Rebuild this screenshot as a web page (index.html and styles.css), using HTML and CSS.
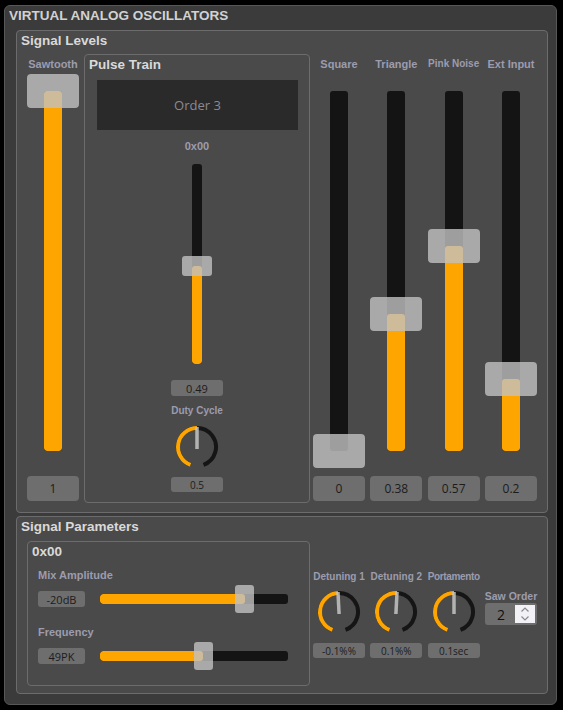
FILE: index.html
```html
<!DOCTYPE html>
<html>
<head>
<meta charset="utf-8">
<link rel="stylesheet" href="styles.css">
</head>
<body>
<div class="app">
  <div class="app-title">VIRTUAL ANALOG OSCILLATORS</div>

  <section class="panel levels">
    <div class="panel-title">Signal Levels</div>
    <div class="levels-body">
      <div class="vcol">
        <div class="vlabel">Sawtooth</div>
        <div class="vslider">
          <div class="vtrack"><div class="vfill" style="height:100%"></div></div>
          <div class="vhandle" style="top:0px"></div>
        </div>
        <div class="vvalue">1</div>
      </div>

      <div class="panel pulse">
        <div class="panel-title pulse-title">Pulse Train</div>
        <div class="display">Order 3</div>
        <div class="sublabel hex">0x00</div>
        <div class="pslider">
          <div class="ptrack"><div class="vfill" style="height:49%"></div></div>
          <div class="phandle" style="top:102px"></div>
        </div>
        <div class="small-value pval">0.49</div>
        <div class="sublabel duty">Duty Cycle</div>
        <svg class="knob duty-knob" width="44" height="44" viewBox="0 0 44 44">
          <path class="k-bg" d="M15.5 39.85 A19 19 0 1 1 28.5 39.85"/>
          <path class="k-fg" d="M15.5 39.85 A19 19 0 0 1 22 3"/>
          <line class="k-ptr" x1="22" y1="24" x2="22" y2="2"/>
        </svg>
        <div class="small-value kval">0.5</div>
      </div>

      <div class="vgroup">
        <div class="vcol">
          <div class="vlabel">Square</div>
          <div class="vslider">
            <div class="vtrack"><div class="vfill" style="height:0%"></div></div>
            <div class="vhandle" style="top:360px"></div>
          </div>
          <div class="vvalue">0</div>
        </div>
        <div class="vcol">
          <div class="vlabel">Triangle</div>
          <div class="vslider">
            <div class="vtrack"><div class="vfill" style="height:38%"></div></div>
            <div class="vhandle" style="top:223px"></div>
          </div>
          <div class="vvalue">0.38</div>
        </div>
        <div class="vcol">
          <div class="vlabel small">Pink Noise</div>
          <div class="vslider">
            <div class="vtrack"><div class="vfill" style="height:57%"></div></div>
            <div class="vhandle" style="top:155px"></div>
          </div>
          <div class="vvalue">0.57</div>
        </div>
        <div class="vcol">
          <div class="vlabel">Ext Input</div>
          <div class="vslider">
            <div class="vtrack"><div class="vfill" style="height:20%"></div></div>
            <div class="vhandle" style="top:288px"></div>
          </div>
          <div class="vvalue">0.2</div>
        </div>
      </div>
    </div>
  </section>

  <section class="panel params">
    <div class="panel-title">Signal Parameters</div>
    <div class="params-body">
      <div class="panel osc">
        <div class="panel-title">0x00</div>
        <div class="hlabel first">Mix Amplitude</div>
        <div class="hrow">
          <div class="hvalue">-20dB</div>
          <div class="hslider">
            <div class="htrack"><div class="hfill" style="width:77%"></div></div>
            <div class="hhandle" style="left:135px"></div>
          </div>
        </div>
        <div class="hlabel second">Frequency</div>
        <div class="hrow">
          <div class="hvalue">49PK</div>
          <div class="hslider">
            <div class="htrack"><div class="hfill" style="width:55%"></div></div>
            <div class="hhandle" style="left:94px"></div>
          </div>
        </div>
      </div>

      <div class="kgroup">
        <div class="kcol">
          <div class="klabel">Detuning 1</div>
          <svg class="knob" width="44" height="44" viewBox="0 0 44 44">
            <path class="k-bg" d="M15.5 39.85 A19 19 0 1 1 28.5 39.85"/>
            <path class="k-fg" d="M15.5 39.85 A19 19 0 0 1 20.94 3.03"/>
            <line class="k-ptr" x1="22" y1="24" x2="22" y2="2" transform="rotate(-3 22 22)"/>
          </svg>
          <div class="small-value">-0.1%%</div>
        </div>
        <div class="kcol">
          <div class="klabel">Detuning 2</div>
          <svg class="knob" width="44" height="44" viewBox="0 0 44 44">
            <path class="k-bg" d="M15.5 39.85 A19 19 0 1 1 28.5 39.85"/>
            <path class="k-fg" d="M15.5 39.85 A19 19 0 0 1 23.06 3.03"/>
            <line class="k-ptr" x1="22" y1="24" x2="22" y2="2" transform="rotate(3 22 22)"/>
          </svg>
          <div class="small-value">0.1%%</div>
        </div>
        <div class="kcol">
          <div class="klabel port">Portamento</div>
          <svg class="knob" width="44" height="44" viewBox="0 0 44 44">
            <path class="k-bg" d="M15.5 39.85 A19 19 0 1 1 28.5 39.85"/>
            <path class="k-fg" d="M15.5 39.85 A19 19 0 0 1 22 3"/>
            <line class="k-ptr" x1="22" y1="24" x2="22" y2="2"/>
          </svg>
          <div class="small-value">0.1sec</div>
        </div>
        <div class="kcol">
          <div class="klabel saw">Saw Order</div>
          <div class="spin">
            <span class="spin-num">2</span>
            <div class="spin-btns">
              <svg width="20" height="18" viewBox="0 0 20 18">
                <polyline points="6.5,6.5 10,3 13.5,6.5" class="chev"/>
                <polyline points="6.5,11.5 10,15 13.5,11.5" class="chev"/>
              </svg>
            </div>
          </div>
        </div>
      </div>
    </div>
  </section>
</div>
</body>
</html>
```

FILE: styles.css
```css
* { box-sizing: border-box; }
html, body { margin: 0; padding: 0; background: #000; }
body { font-family: "Liberation Sans", Arial, sans-serif; }

.app {
  margin: 5px 0 0 4px;
  width: 553px;
  height: 700px;
  background: #3b3b3b;
  border: 1px solid #575757;
  border-radius: 6px;
  padding: 2px 8px 10px 11px;
  display: flex;
  flex-direction: column;
}
.app-title {
  font-weight: bold;
  font-size: 13.5px;
  line-height: 16px;
  height: 16px;
  color: #d2d2d2;
  margin: 0 0 6px -7px;
  white-space: nowrap;
}

.panel {
  background: #4a4a4a;
  border: 1px solid #6c6c6c;
  border-radius: 4px;
}
.panel-title {
  font-weight: bold;
  font-size: 13.5px;
  line-height: 16px;
  color: #d9d9d9;
  padding: 2px 0 0 4px;
  white-space: nowrap;
}

.levels { height: 483px; margin-bottom: 3px; }
.params { height: 178px; }

.levels-body {
  display: flex;
  align-items: flex-start;
  gap: 5px;
  margin-top: 5px;
  padding: 0 10px;
}

.vcol {
  width: 52px;
  display: flex;
  flex-direction: column;
  align-items: center;
}
.vlabel {
  height: 20px;
  line-height: 20px;
  font-weight: bold;
  font-size: 11px;
  color: #9c9cae;
  white-space: nowrap;
}
.vlabel.small { font-size: 10px; }
.vslider {
  position: relative;
  width: 52px;
  height: 394px;
}
.vtrack {
  position: relative;
  width: 18px;
  height: 360px;
  margin: 17px auto 0;
  background: #141414;
  border-radius: 3px;
  overflow: hidden;
}
.vfill {
  position: absolute;
  left: 0;
  right: 0;
  bottom: 0;
  background: #ffa500;
  border-radius: 3px;
}
.vhandle {
  position: absolute;
  left: 0;
  width: 52px;
  height: 34px;
  background: rgba(192, 192, 192, 0.8);
  border-radius: 4px;
}
.vvalue {
  margin-top: 8px;
  width: 52px;
  height: 25px;
  background: #6e6e6e;
  border-radius: 4px;
  display: flex;
  align-items: center;
  justify-content: center;
  font-family: "Open Sans", "Liberation Sans", sans-serif;
  font-size: 12px;
  color: #1c1c1c;
}

.vgroup {
  display: grid;
  grid-template-columns: repeat(4, 52px);
  column-gap: 5.33px;
  margin-left: -2px;
}

.pulse {
  width: 226px;
  height: 449px;
  display: flex;
  flex-direction: column;
  align-items: center;
}
.pulse-title { align-self: stretch; }
.display {
  margin-top: 7px;
  margin-left: 1px;
  width: 201px;
  height: 50px;
  background: #2a2a2a;
  display: flex;
  align-items: center;
  justify-content: center;
  font-family: "Open Sans", "Liberation Sans", sans-serif;
  font-size: 13px;
  color: #8a8a8e;
}
.sublabel {
  font-weight: bold;
  font-size: 11px;
  line-height: 14px;
  color: #9c9cae;
  white-space: nowrap;
}
.hex { margin-top: 9px; }
.duty { margin-top: 8px; font-size: 10px; }
.pslider {
  position: relative;
  margin-top: 1px;
  width: 30px;
  height: 220px;
}
.ptrack {
  position: relative;
  width: 10px;
  height: 200px;
  margin: 10px auto 0;
  background: #141414;
  border-radius: 3px;
  overflow: hidden;
}
.phandle {
  position: absolute;
  left: 0;
  width: 30px;
  height: 20px;
  background: rgba(192, 192, 192, 0.8);
  border-radius: 3px;
}
.small-value {
  width: 52px;
  height: 15px;
  background: #6e6e6e;
  border-radius: 3px;
  display: flex;
  align-items: center;
  justify-content: center;
  font-family: "Open Sans", "Liberation Sans", sans-serif;
  font-size: 10px;
  color: #1c1c1c;
  white-space: nowrap;
}
.pval { margin-top: 6px; height: 16px; font-size: 11px; }
.duty-knob { margin-top: 7px; }
.kval { margin-top: 8px; }

.knob { display: block; }
.k-bg { fill: none; stroke: #151515; stroke-width: 4; }
.k-fg { fill: none; stroke: #ffa500; stroke-width: 4; }
.k-ptr { stroke: rgba(196, 196, 196, 0.85); stroke-width: 3.5; }

.params-body {
  display: flex;
  align-items: flex-start;
  gap: 3px;
  margin-top: 6px;
  padding-left: 10px;
}
.osc {
  width: 283px;
  height: 145px;
}
.hlabel {
  font-weight: bold;
  font-size: 11px;
  line-height: 14px;
  color: #9c9cae;
  padding-left: 10px;
}
.hlabel.first { margin-top: 8px; }
.hlabel.second { margin-top: 12px; }
.hrow {
  display: flex;
  align-items: center;
  height: 28px;
  margin-top: 3px;
  padding-left: 10px;
}
.hvalue {
  width: 47px;
  height: 16px;
  background: #6e6e6e;
  border-radius: 3px;
  display: flex;
  align-items: center;
  justify-content: center;
  font-family: "Open Sans", "Liberation Sans", sans-serif;
  font-size: 11px;
  color: #1c1c1c;
}
.hslider {
  position: relative;
  width: 188px;
  height: 28px;
  margin-left: 15px;
}
.htrack {
  position: absolute;
  left: 0;
  right: 0;
  top: 9px;
  height: 10px;
  background: #141414;
  border-radius: 3px;
  overflow: hidden;
}
.hfill {
  height: 100%;
  background: #ffa500;
  border-radius: 3px;
}
.hhandle {
  position: absolute;
  top: 0;
  width: 19px;
  height: 28px;
  background: rgba(192, 192, 192, 0.8);
  border-radius: 3px;
}

.kgroup {
  display: grid;
  grid-template-columns: repeat(4, 52px);
  column-gap: 5.33px;
  align-items: start;
}
.kcol {
  display: flex;
  flex-direction: column;
  align-items: center;
}
.klabel {
  margin-top: 29px;
  font-weight: bold;
  font-size: 10px;
  line-height: 14px;
  color: #9c9cae;
  white-space: nowrap;
}
.klabel.port { letter-spacing: -0.35px; }
.klabel.saw { margin-top: 48px; font-size: 10.5px; }
.kcol .knob { margin-top: 6px; }
.kcol .small-value { margin-top: 9px; }

.spin {
  width: 52px;
  height: 22px;
  background: #6e6e6e;
  border-radius: 3px;
  display: flex;
  align-items: center;
}
.spin-num {
  flex: 1;
  text-align: center;
  font-family: "Open Sans", "Liberation Sans", sans-serif;
  font-size: 14px;
  color: #111;
  padding-left: 2px;
}
.spin-btns {
  width: 20px;
  height: 18px;
  margin-right: 2px;
  background: #f2f2f6;
}
.spin-btns svg { display: block; }
.chev { fill: none; stroke: #8a8a90; stroke-width: 1.2; }
```
